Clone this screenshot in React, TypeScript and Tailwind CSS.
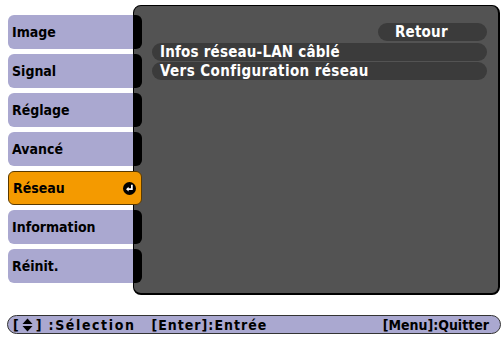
import React from "react";

const tabs = ["Image", "Signal", "Réglage", "Avancé", "Réseau", "Information", "Réinit."];
const active = "Réseau";

function EnterIcon() {
    return (
        <svg width="13" height="13" viewBox="0 0 12 12" className="shrink-0">
            <circle cx="6" cy="6" r="6" fill="#000" />
            <path d="M8.2 2.6 V6.6 H4.6" fill="none" stroke="#fff" strokeWidth="1.6" />
            <path d="M5.2 4.4 L2.8 6.6 L5.2 8.8 Z" fill="#fff" />
        </svg>
    );
}

function UpDown() {
    return (
        <svg width="11" height="14" viewBox="0 0 11 14" className="mx-[3px]">
            <path d="M5.5 0.5 L10.5 6 H0.5 Z" fill="#000" />
            <path d="M0.5 8 H10.5 L5.5 13.5 Z" fill="#000" />
        </svg>
    );
}

export default function App() {
    return (
        <div className="w-[504px] h-[340px] bg-white font-['DejaVu_Sans_Condensed','DejaVu_Sans',sans-serif] font-bold">
            <div className="flex pt-[5px]">
                {/* menu tabs */}
                <div className="flex flex-col gap-[5px] pt-[10px] pl-[8px] w-[133px] shrink-0">
                    {tabs.map((t) =>
                        t === active ? (
                            <div
                                key={t}
                                className="relative z-10 w-[134px] h-[34px] flex items-center justify-between pl-[4px] pr-[5px] bg-[#f49a00] border border-[#5a3a00] rounded-[6px] text-[14px] text-black"
                            >
                                <span>{t}</span>
                                <EnterIcon />
                            </div>
                        ) : (
                            <div
                                key={t}
                                className="w-[125px] h-[34px] flex items-center pl-[4px] bg-[#aaa8d0] rounded-l-[6px] text-[14px] text-black"
                            >
                                {t}
                            </div>
                        )
                    )}
                </div>

                {/* panel */}
                <div className="w-[367px] h-[290px] flex bg-[#535353] border-t border-l border-r-2 border-b-2 border-black rounded-[8px]">
                    <div className="flex flex-col gap-[5px] pt-[9px] w-[8px] shrink-0">
                        {tabs.map((t) => (
                            <div
                                key={t}
                                className={t === active ? "h-[34px]" : "h-[34px] bg-black rounded-r-[6px]"}
                            />
                        ))}
                    </div>
                    <div className="flex-1 flex flex-col pt-[17px] pl-[10px] pr-[11px] text-[15px] text-white leading-none tracking-[0.2px]">
                        <div className="self-end w-[109px] h-[18px] flex items-center pl-[17px] bg-[#3b3b3b] rounded-full">
                            Retour
                        </div>
                        <div className="mt-[2px] h-[18px] flex items-center pl-[8px] bg-[#3b3b3b] rounded-full">
                            Infos réseau-LAN câblé
                        </div>
                        <div className="mt-[1px] h-[18px] flex items-center pl-[8px] bg-[#3b3b3b] rounded-full tracking-[0.4px]">
                            Vers Configuration réseau
                        </div>
                    </div>
                </div>
            </div>

            {/* help bar */}
            <div className="mt-[20px] ml-[7px] w-[494px] h-[19px] flex items-center pl-[5px] pr-[11px] bg-[#aaa8d0] border border-[#333] rounded-full text-[14px] text-black leading-none">
                <span className="flex items-center">
                    [<UpDown />]<span className="ml-[7px] tracking-[1.6px]">:Sélection</span>
                </span>
                <span className="ml-[16px] tracking-[1px]">[Enter]:Entrée</span>
                <span className="ml-auto">[Menu]:Quitter</span>
            </div>
        </div>
    );
}
